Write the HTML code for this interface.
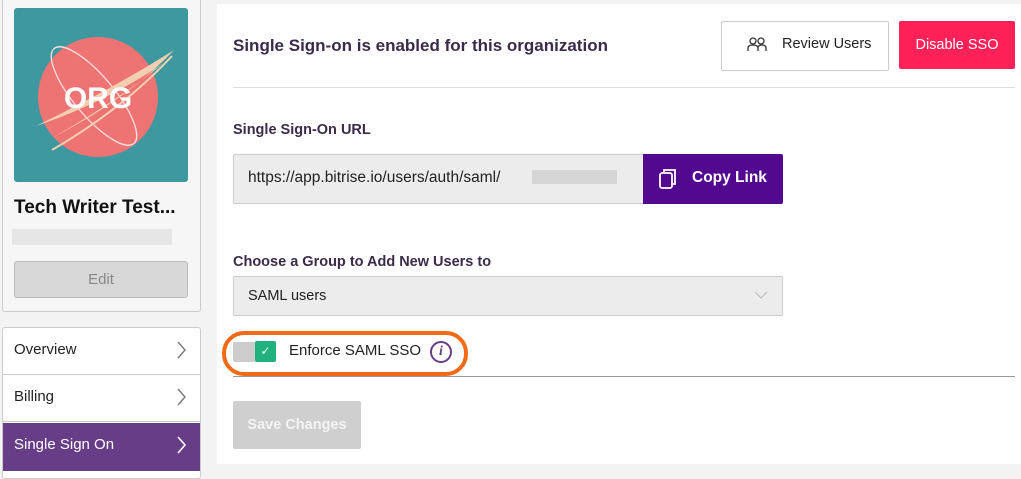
<!DOCTYPE html>
<html><head><style>
body{margin:0;width:1021px;height:476px;background:#f3f3f3;font-family:"Liberation Sans",sans-serif;position:relative;overflow:hidden;color:#222}
.a{position:absolute}
</style></head><body>
<div class="a" style="left:2px;top:-2px;width:197px;height:312px;background:#f6f6f6;border:1px solid #ccc;border-radius:3px"></div>
<div class="a" style="left:14px;top:8px;width:174px;height:174px;background:#3e989f;border-radius:3px;overflow:hidden">
<svg width="174" height="174"><circle cx="84" cy="89" r="60" fill="#ee7474"/>
<ellipse cx="80" cy="88" rx="20" ry="62" transform="rotate(-40 80 88)" fill="none" stroke="#f9dede" stroke-width="1.3"/>
<path d="M22 118 Q100 80 160 42 Q115 90 38 130 Q100 95 150 55 Q90 95 22 118Z" fill="#f1cfb0"/>
<path d="M38 142 Q110 100 158 48" fill="none" stroke="#f1cfb0" stroke-width="2"/>
<text x="84" y="100" text-anchor="middle" font-family="Liberation Sans" font-weight="bold" font-size="30" fill="#fff">ORG</text></svg></div>
<div class="a" style="left:14px;top:197px;font-weight:bold;font-size:19px;color:#111">Tech Writer Test...</div>
<div class="a" style="left:12px;top:229px;width:160px;height:16px;background:#e6e6e6"></div>
<div class="a" style="left:14px;top:261px;width:172px;height:35px;background:#d8d8d8;border:1px solid #bbb;border-radius:3px;text-align:center;line-height:35px;color:#888;font-size:15px">Edit</div>
<div class="a" style="left:2px;top:327px;width:197px;height:150px;background:#fff;border:1px solid #ccc;border-radius:3px"></div>
<div class="a" style="left:3px;top:374px;width:197px;height:1px;background:#ccc"></div>
<div class="a" style="left:3px;top:421px;width:197px;height:1px;background:#ccc"></div>
<div class="a" style="left:14px;top:341px;font-size:15px">Overview</div>
<svg class="a" style="left:177px;top:341px" width="10" height="18"><path d="M1 1 L8 9 L1 17" fill="none" stroke="#777" stroke-width="1.4"/></svg>
<div class="a" style="left:14px;top:388px;font-size:15px">Billing</div>
<svg class="a" style="left:177px;top:388px" width="10" height="18"><path d="M1 1 L8 9 L1 17" fill="none" stroke="#777" stroke-width="1.4"/></svg>
<div class="a" style="left:3px;top:423px;width:197px;height:48px;background:#683d87"></div>
<div class="a" style="left:14px;top:436px;font-size:15px;color:#fff">Single Sign On</div>
<svg class="a" style="left:177px;top:436px" width="10" height="18"><path d="M1 1 L8 9 L1 17" fill="none" stroke="#fff" stroke-width="1.6"/></svg>

<div class="a" style="left:217px;top:4px;width:804px;height:460px;background:#fff"></div>
<div class="a" style="left:233px;top:36px;font-weight:bold;font-size:17px;color:#3b2a4a">Single Sign-on is enabled for this organization</div>
<div class="a" style="left:721px;top:21px;width:166px;height:48px;border:1px solid #ccc;border-radius:2px;background:#fff"></div>
<svg class="a" style="left:747px;top:36px" width="20" height="18"><circle cx="6" cy="5" r="3" fill="none" stroke="#333" stroke-width="1.3"/><circle cx="14" cy="5" r="3" fill="none" stroke="#333" stroke-width="1.3"/><path d="M1 15 v-3 q0-3 5-3 q5 0 5 3 v3 M11 15 v-3 q0-3 4-3 q4 0 4 3 v3" fill="none" stroke="#333" stroke-width="1.3"/></svg>
<div class="a" style="left:782px;top:36px;font-size:14.5px;color:#222">Review Users</div>
<div class="a" style="left:899px;top:21px;width:116px;height:48px;background:#ff2158;border-radius:2px;color:#fff;font-size:14.5px;text-align:center;line-height:48px">Disable SSO</div>
<div class="a" style="left:233px;top:87px;width:782px;height:1px;background:#ddd"></div>
<div class="a" style="left:233px;top:122px;font-weight:bold;font-size:14.5px;color:#3b2a4a">Single Sign-On URL</div>
<div class="a" style="left:233px;top:154px;width:410px;height:48px;background:#ececec;border:1px solid #ccc;border-right:none;border-radius:2px 0 0 2px"></div>
<div class="a" style="left:248px;top:169px;font-size:15.5px;color:#222">https://app.bitrise.io/users/auth/saml/</div>
<div class="a" style="left:532px;top:170px;width:85px;height:14px;background:#cfcfcf;opacity:.8"></div>
<div class="a" style="left:643px;top:154px;width:140px;height:50px;background:#520990;border-radius:0 2px 2px 0"></div>
<svg class="a" style="left:658px;top:167px" width="22" height="24"><rect x="2" y="6" width="12" height="15" rx="2" fill="none" stroke="#fff" stroke-width="1.8"/><path d="M6 5 V3 h11 v14 h-2" fill="none" stroke="#fff" stroke-width="1.8"/></svg>
<div class="a" style="left:692px;top:169px;font-size:15.5px;font-weight:bold;color:#fff">Copy Link</div>
<div class="a" style="left:233px;top:254px;font-weight:bold;font-size:14.5px;color:#3b2a4a">Choose a Group to Add New Users to</div>
<div class="a" style="left:233px;top:276px;width:548px;height:38px;background:#ececec;border:1px solid #ccc;border-radius:2px"></div>
<div class="a" style="left:248px;top:288px;font-size:14.5px">SAML users</div>
<svg class="a" style="left:754px;top:291px" width="14" height="9"><path d="M1 1 L7 7 L13 1" fill="none" stroke="#bbb"/></svg>
<div class="a" style="left:222px;top:331px;width:238px;height:37px;border:4px solid #f26a16;border-radius:22px"></div>
<div class="a" style="left:233px;top:342px;width:22px;height:20px;background:#ccc;border-radius:2px 0 0 2px"></div>
<div class="a" style="left:255px;top:341px;width:21px;height:21px;background:#20b17f;border-radius:2px;color:#fff;font-size:12px;text-align:center;line-height:21px">✓</div>
<div class="a" style="left:289px;top:342px;font-size:15px">Enforce SAML SSO</div>
<div class="a" style="left:430px;top:341px;width:18px;height:18px;border:2px solid #683d87;border-radius:50%;color:#683d87;font-size:14px;font-weight:bold;text-align:center;line-height:18px;font-family:'Liberation Serif',serif;font-style:italic">i</div>
<div class="a" style="left:233px;top:376px;width:782px;height:1px;background:#999"></div>
<div class="a" style="left:233px;top:401px;width:128px;height:48px;background:#cfcfcf;border-radius:2px;color:#f4f4f4;font-size:14.5px;font-weight:bold;text-align:center;line-height:48px">Save Changes</div>
</body></html>
